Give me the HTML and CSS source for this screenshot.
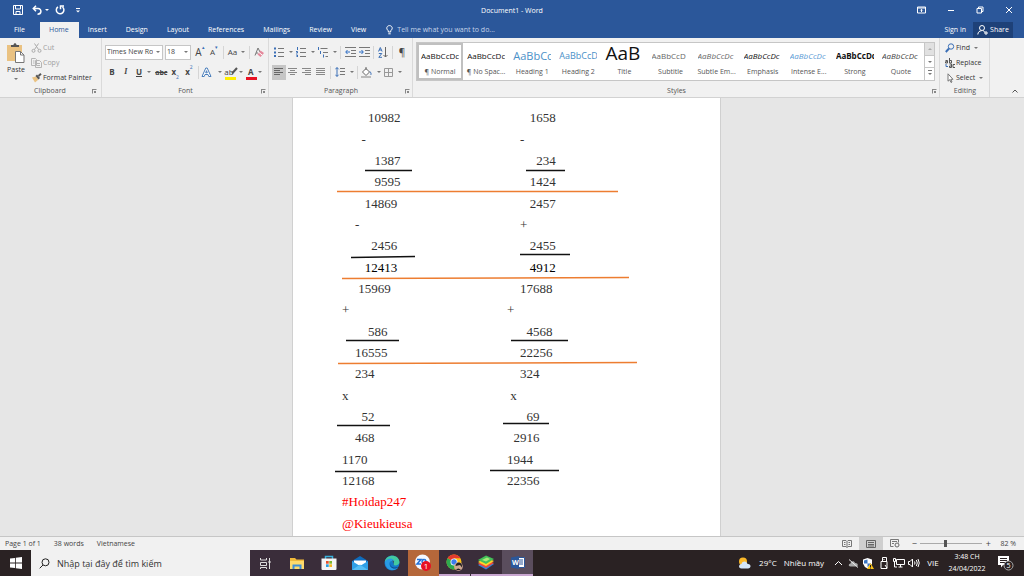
FILE: index.html
```
<!DOCTYPE html>
<html lang="vi">

<head>
    <meta charset="UTF-8">
    <title>Document1 - Word</title>
    <link rel="stylesheet" href="styles.css">
</head>

<body>
    <header class="top">
        <div class="titlebar">
            <div class="quick">
                <button aria-label="Save"><svg width="10" height="10" viewBox="0 0 10 10"><path d="M.5.5h9v9h-9zM2.500 .5v3.500h5v-3.500M3 9.500v-3h4v3" class="line"/></svg></button>
                <button aria-label="Undo"><svg width="10" height="10" viewBox="0 0 10 10"><path d="M4 .8L1.300 3.500 4 6.200M1.500 3.500h4.500c4 0 4 5.700-.500 5.700" class="line bold"/></svg></button>
                <i class="caret"></i>
                <button aria-label="Redo"><svg width="10" height="10" viewBox="0 0 10 10"><path d="M3 1.800A3.800 3.800 0 1 0 7.500 2M5.500 4.300V1h3.500" class="line bold"/></svg></button>
                <button aria-label="Customize"><svg width="8" height="8" viewBox="0 0 8 8"><path d="M2 2.500h4" class="line"/><path d="M2 4.500h4l-2 2z" fill="#fff"/></svg></button>
            </div>
            <h1>Document1 - Word</h1>
            <div class="window">
                <button aria-label="Ribbon options"><svg width="9" height="8" viewBox="0 0 9 8"><path d="M.5 1h8v6h-8zM.5 2h8M4.500 6V3.500M3.300 4.500l1.200-1.200 1.200 1.200" class="line"/></svg></button>
                <button aria-label="Minimize"><svg width="8" height="8" viewBox="0 0 8 8"><path d="M1 4.500h6" class="line"/></svg></button>
                <button aria-label="Restore"><svg width="8" height="8" viewBox="0 0 8 8"><path d="M1 2.500h4.500v4.500H1zM2.500 2.500V1H7v4.500H5.500" class="line"/></svg></button>
                <button aria-label="Close"><svg width="8" height="8" viewBox="0 0 8 8"><path d="M1 1l6 6M7 1L1 7" class="line"/></svg></button>
            </div>
        </div>
        <nav class="tabs">
            <button>File</button>
            <button class="active">Home</button>
            <button>Insert</button>
            <button>Design</button>
            <button>Layout</button>
            <button>References</button>
            <button>Mailings</button>
            <button>Review</button>
            <button>View</button>
            <label class="tell">
                <svg width="7" height="10" viewBox="0 0 7 10"><path d="M2.300 7V5.800C-.5 3.500 1 .6 3.500.6S7.500 3.500 4.700 5.800V7zM2.300 8.800h2.400" class="line"/></svg>
                <input type="text" placeholder="Tell me what you want to do...">
            </label>
            <button class="signin">Sign in</button>
            <button class="share"><svg width="11" height="10" viewBox="0 0 11 10"><circle cx="5" cy="3" r="2.500" class="line"/><path d="M.8 9.500C1 7 2.500 5.800 4.500 5.800M6 5.500l2 1.800M7 8h4M9 6v4" class="line"/></svg>Share</button>
        </nav>
    </header>

    <section class="ribbon">
        <div class="group clipboard">
            <div class="group-body">
                <button class="paste">
                    <svg width="18" height="20" viewBox="0 0 18 20"><path d="M0 2h15v16H0z" fill="#eac282"/><path d="M4 4V2h2.500c0-2.500 3-2.500 3 0H12v2z" fill="#555"/><path d="M8.500 8.500h5l3.500 3.500v7.500H8.500z" fill="#fff" stroke="#777"/><path d="M13.500 8.500V12H17" fill="none" stroke="#777"/></svg>
                    Paste
                    <i class="caret"></i>
                </button>
                <div class="stack">
                    <button class="off"><svg width="11" height="10" viewBox="0 0 11 10"><path d="M3.500.5l4 6M7.500.5l-4 6" stroke="#aaa" fill="none"/><circle cx="2.500" cy="7.800" r="1.500" stroke="#aaa" fill="none"/><circle cx="8.500" cy="7.800" r="1.500" stroke="#aaa" fill="none"/></svg>Cut</button>
                    <button class="off"><svg width="11" height="10" viewBox="0 0 11 10"><path d="M.5.5h4l1 1v6h-5zM4.500 2.500h4l2 2v5h-6zM6 5.500h3M6 7.500h3M2 3h1.500M2 5h1.500" stroke="#b5b5b5" fill="none"/></svg>Copy</button>
                    <button><svg width="11" height="10" viewBox="0 0 11 10"><path d="M1 4.500l4-1 2.500 3L4 9.500z" fill="#eac282"/><path d="M4.500 3l1.500-1.500 3 3.500-1.500 1.500z" fill="#555"/><path d="M7.500 3L10 .8" stroke="#555" stroke-width="2"/></svg>Format Painter</button>
                </div>
            </div>
            <footer>Clipboard<i class="launch"></i></footer>
        </div>

        <div class="group font">
            <div class="group-body rows">
                <div class="row">
                    <span class="pick name"><select aria-label="Font"><option>Times New Roman</option></select><i class="caret"></i></span>
                    <span class="pick size"><select aria-label="Font size"><option>18</option></select><i class="caret"></i></span>
                    <button class="tool big">A<sup>▴</sup></button>
                    <button class="tool">A<sup>▾</sup></button>
                    <i class="sep"></i>
                    <button class="tool wide">Aa<i class="caret"></i></button>
                    <i class="sep"></i>
                    <button class="tool" aria-label="Clear formatting"><svg width="11" height="11" viewBox="0 0 11 11"><path d="M1 8.500L4 1l2 4M2 6h2" stroke="#777" fill="none"/><path d="M6.500 3.500L10 6 6.500 10 3.500 7.500z" fill="#e4899c"/><path d="M5 5.500l3.300 2.700" stroke="#fff"/></svg></button>
                </div>
                <div class="row">
                    <button class="tool"><b>B</b></button>
                    <button class="tool"><i class="ital">I</i></button>
                    <button class="tool more"><b><u>U</u></b><i class="caret"></i></button>
                    <button class="tool"><b><s>abc</s></b></button>
                    <button class="tool"><b>x</b><sub>2</sub></button>
                    <button class="tool"><b>x</b><sup>2</sup></button>
                    <i class="sep"></i>
                    <button class="tool more" aria-label="Text effects"><svg width="12" height="11" viewBox="0 0 12 11"><path d="M1 9.500L4.800 1h1.400L10 9.500H7.800L7 7.500H4l-.8 2zM4.700 5.800h1.600L5.500 3.700z" fill="#fff" stroke="#4a7ebb"/></svg><i class="caret"></i></button>
                    <button class="tool more mark">ab<i class="caret"></i><svg width="8" height="8" viewBox="0 0 8 8"><path d="M2 6.500L7 1" stroke="#555" stroke-width="2"/></svg></button>
                    <button class="tool more colour"><b>A</b><i class="caret"></i></button>
                </div>
            </div>
            <footer>Font<i class="launch"></i></footer>
        </div>

        <div class="group para">
            <div class="group-body rows">
                <div class="row">
                    <button class="tool more" aria-label="Bullets"><svg width="10" height="10" viewBox="0 0 10 10"><path d="M0 1.500h2M0 5.500h2M0 9h2" stroke="#3b6fb6" stroke-width="2"/><path d="M4 1.500h6M4 5.500h6M4 9.500h6" stroke="#777"/></svg><i class="caret"></i></button>
                    <button class="tool more" aria-label="Numbering"><svg width="10" height="10" viewBox="0 0 10 10"><path d="M1.500 0v3M0 4.500h1.500v1.500H0M0 8h1.500v2H0" stroke="#3b6fb6" fill="none"/><path d="M4 1.500h6M4 5.500h6M4 9.500h6" stroke="#777"/></svg><i class="caret"></i></button>
                    <button class="tool more" aria-label="Multilevel list"><svg width="11" height="11" viewBox="0 0 11 11"><path d="M1.500 0v3M3.500 4v3M6.500 7.500v3" stroke="#3b6fb6"/><path d="M3.500 1.500h7M6 5.500h5M8.500 9.500h2.500" stroke="#777"/></svg><i class="caret"></i></button>
                    <i class="sep"></i>
                    <button class="tool" aria-label="Decrease indent"><svg width="11" height="10" viewBox="0 0 11 10"><path d="M0 .5h11M6 3.500h5M6 6.500h5M0 9.500h11" stroke="#777"/><path d="M5 5H1M2.500 3L.7 5l1.800 2" stroke="#2b6cc4" fill="none"/></svg></button>
                    <button class="tool" aria-label="Increase indent"><svg width="11" height="10" viewBox="0 0 11 10"><path d="M0 .5h11M6 3.500h5M6 6.500h5M0 9.500h11" stroke="#777"/><path d="M0 5h4M2.500 3l1.800 2-1.800 2" stroke="#2b6cc4" fill="none"/></svg></button>
                    <i class="sep"></i>
                    <button class="tool" aria-label="Sort"><svg width="10" height="11" viewBox="0 0 10 11"><path d="M.5 4.500L2.300.5l1.800 4M1.200 3h2.200M.8 6.500h3L.8 10.300h3.200" stroke="#3b6fb6" fill="none"/><path d="M7.500 0v10M5.500 8l2 2 2-2" stroke="#666" fill="none"/></svg></button>
                    <i class="sep"></i>
                    <button class="tool big">¶</button>
                </div>
                <div class="row">
                    <button class="tool on" aria-label="Align left"><svg width="10" height="8" viewBox="0 0 10 8"><path d="M0 .5h9M0 2.500h6M0 4.500h9M0 6.500h6" stroke="#666"/></svg></button>
                    <button class="tool" aria-label="Center"><svg width="10" height="8" viewBox="0 0 10 8"><path d="M0 .5h9M2 2.500h5M0 4.500h9M2 6.500h5" stroke="#888"/></svg></button>
                    <button class="tool" aria-label="Align right"><svg width="10" height="8" viewBox="0 0 10 8"><path d="M0 .5h9M3 2.500h6M0 4.500h9M3 6.500h6" stroke="#888"/></svg></button>
                    <button class="tool" aria-label="Justify"><svg width="10" height="8" viewBox="0 0 10 8"><path d="M0 .5h9M0 2.500h9M0 4.500h9M0 6.500h9" stroke="#888"/></svg></button>
                    <i class="sep"></i>
                    <button class="tool more" aria-label="Line spacing"><svg width="10" height="10" viewBox="0 0 10 10"><path d="M2 .5v9M.3 2.300L2 .6l1.700 1.700M.3 7.700L2 9.400l1.700-1.700" stroke="#3b6fb6" fill="none"/><path d="M5 1.500h5M5 4.500h5M5 7.500h5" stroke="#777"/></svg><i class="caret"></i></button>
                    <i class="sep"></i>
                    <button class="tool more" aria-label="Shading"><svg width="11" height="11" viewBox="0 0 11 11"><path d="M1.500 5L5 1.500 8.500 5 5 8.500zM5 3V0" stroke="#666" fill="#fff"/><path d="M9 4.500c1.500 2 1.200 3 .5 3.500" stroke="#3b6fb6" fill="none"/><path d="M0 9h10v2H0z" fill="#bbb"/></svg><i class="caret"></i></button>
                    <button class="tool more" aria-label="Borders"><svg width="9" height="9" viewBox="0 0 9 9"><path d="M.5.5h8v8h-8zM4.500.5v8M.5 4.500h8" stroke="#999" fill="none"/></svg><i class="caret"></i></button>
                </div>
            </div>
            <footer>Paragraph<i class="launch"></i></footer>
        </div>

        <div class="group styles">
            <div class="group-body">
                <div class="gallery">
                    <button class="current"><span class="sample">AaBbCcDc</span>¶ Normal</button>
                    <button><span class="sample">AaBbCcDc</span>¶ No Spac...</button>
                    <button><span class="sample h1">AaBbCc</span>Heading 1</button>
                    <button><span class="sample h2">AaBbCcD</span>Heading 2</button>
                    <button><span class="sample title">AaB</span>Title</button>
                    <button><span class="sample grey">AaBbCcD</span>Subtitle</button>
                    <button><span class="sample grey em">AaBbCcDc</span>Subtle Em...</button>
                    <button><span class="sample em">AaBbCcDc</span>Emphasis</button>
                    <button><span class="sample blue em">AaBbCcDc</span>Intense E...</button>
                    <button><span class="sample strong">AaBbCcDc</span>Strong</button>
                    <button><span class="sample quote em">AaBbCcDc</span>Quote</button>
                    <div class="scroll">
                        <button class="none" aria-label="Up"><i class="caret up"></i></button>
                        <button aria-label="Down"><i class="caret"></i></button>
                        <button aria-label="More"><i class="caret bar"></i></button>
                    </div>
                </div>
            </div>
            <footer>Styles<i class="launch"></i></footer>
        </div>

        <div class="group editing">
            <div class="group-body">
                <div class="stack">
                    <button><svg width="10" height="10" viewBox="0 0 10 10"><circle cx="6" cy="3.500" r="2.700" stroke="#3b6fb6" fill="none"/><path d="M4 5.500L.8 9" stroke="#3b6fb6" stroke-width="2"/></svg>Find<i class="caret"></i></button>
                    <button><svg width="10" height="10" viewBox="0 0 10 10"><path d="M.5 2.500h2v2.500h-2v-1.300h2M4.500 0v5h2V2.500h-2M4.500 6h2v3.500h-2v-1.500h2M10 6.500H8v3h2" stroke="#555" fill="none"/><path d="M1 6v2.500h2" stroke="#3b6fb6" fill="none"/></svg>Replace</button>
                    <button><svg width="10" height="10" viewBox="0 0 10 10"><path d="M3 .8v7.400l1.800-1.500 1.200 2.800 1-.5-1.200-2.700H8z" stroke="#777" fill="#fff"/></svg>Select<i class="caret"></i></button>
                </div>
            </div>
            <footer>Editing</footer>
        </div>
        <button class="collapse" aria-label="Collapse ribbon"><svg width="6" height="4" viewBox="0 0 6 4"><path d="M.5 3.500L3 1l2.500 2.500" stroke="#555" fill="none"/></svg></button>
    </section>

    <main class="desk">
        <article class="page">
            <p><span>        10982</span><span>       1658</span></p>
            <p><span>      -</span><span>    -</span></p>
            <p><span>          1387</span><span>         234</span></p>
            <p><span>          9595</span><span>       1424</span></p>
            <p><span>       14869</span><span>       2457</span></p>
            <p><span>    -</span><span>    +</span></p>
            <p><span>         2456</span><span>       2455</span></p>
            <p class="dark"><span>       12413</span><span>       4912</span></p>
            <p><span>     15969</span><span>    17688</span></p>
            <p><span>+</span><span>+</span></p>
            <p><span>        586</span><span>      4568</span></p>
            <p><span>    16555</span><span>    22256</span></p>
            <p><span>    234</span><span>    324</span></p>
            <p><span>x</span><span> x</span></p>
            <p><span>      52</span><span>      69</span></p>
            <p><span>    468</span><span>  2916</span></p>
            <p><span>1170</span><span>1944</span></p>
            <p><span>12168</span><span>22356</span></p>
            <p class="red"><span>#Hoidap247</span></p>
            <p class="red"><span>@Kieukieusa</span></p>
            <!-- hand drawn rules -->
            <svg class="rules" width="427" height="438" viewBox="0 0 427 438">
                <g stroke="#111" stroke-width="1.500">
                    <path d="M72 72.500h47M233 72.500h39M58 159.500l64-1M227 156.500h50M53 242.500h53M218 242.500h57M44 327.500h53M210 325.500h46M42 373.500h62M197 372.500h69"/>
                </g>
                <g stroke="#ed7d31" stroke-width="1.500">
                    <path d="M44 93.500h281M49 180.500l287-1M45 265.500l299-1"/>
                </g>
            </svg>
        </article>
    </main>

    <div class="status">
        <span>Page 1 of 1</span>
        <span>38 words</span>
        <span>Vietnamese</span>
        <div class="views">
            <button aria-label="Read mode"><svg width="10" height="8" viewBox="0 0 10 8"><path d="M.5.5h3.500l1 1 1-1h3.500v6H6l-1 1-1-1H.5zM5 1.500v6M2 2.500h1.500M2 4.500h1.500M6.500 2.500H8M6.500 4.500H8" stroke="#777" fill="none"/></svg></button>
            <button class="on" aria-label="Print layout"><svg width="10" height="8" viewBox="0 0 10 8"><path d="M.5.5h9v7h-9zM2 2.500h6M2 4.500h6M2 6h6" stroke="#666" fill="none"/></svg></button>
            <button aria-label="Web layout"><svg width="10" height="9" viewBox="0 0 10 9"><path d="M.5 7.500v-7h8v3M2 2.500h5M2 4.500h2M.5 7.500h3" stroke="#777" fill="none"/><circle cx="7" cy="6" r="2" stroke="#666" fill="none"/></svg></button>
        </div>
        <div class="zoom">
            <button>−</button>
            <input type="range" min="10" max="190" value="82" aria-label="Zoom">
            <button>+</button>
        </div>
        <span class="percent">82 %</span>
    </div>

    <footer class="taskbar">
        <button class="start" aria-label="Start"><svg width="12" height="12" viewBox="0 0 12 12"><path d="M0 1.500L5 1v4.600H0zM5.800.8L12 0v5.600H5.800zM0 6.400h5V11l-5-.600zM5.800 6.400H12V12l-6.200-.8z" fill="#fff"/></svg></button>
        <label class="search">
            <svg width="11" height="11" viewBox="0 0 11 11"><circle cx="6.500" cy="4.300" r="3.500" stroke="#222" fill="none"/><path d="M4 7L.7 10.300" stroke="#222"/></svg>
            <input type="text" placeholder="Nhập tại đây để tìm kiếm">
        </label>
        <div class="apps">
            <button aria-label="Task view"><svg width="11" height="11" viewBox="0 0 11 11"><path d="M.5 0v2h6V0M.5 4.500h6v3h-6zM.5 11V9.500h6V11M9.500 0v11" stroke="#ddd" fill="none"/><path d="M8.500 3h2v2h-2z" fill="#ddd"/></svg></button>
            <button aria-label="Explorer"><svg width="14" height="13" viewBox="0 0 14 13"><path d="M0 1h5l1.500 1.500H14V12H0z" fill="#f0b93a"/><path d="M0 4h14v8H0z" fill="#ffda6b"/><path d="M2.500 12V7.500h9V12h-2V9.500h-5V12z" fill="#3f8fd8"/></svg></button>
            <button aria-label="Store"><svg width="16" height="16" viewBox="0 0 16 16"><path d="M4.500 4V1.500h7V4" stroke="#39b1dc" stroke-width="1.500" fill="none"/><path d="M.5 3.500h15V14q0 1-1 1h-13q-1 0-1-1z" fill="#f5f5f5"/><path d="M5 6h2.700v2.700H5z" fill="#e8512a"/><path d="M8.300 6H11v2.700H8.300z" fill="#7cb82f"/><path d="M5 9.300h2.700V12H5z" fill="#2a9fe0"/><path d="M8.300 9.300H11V12H8.300z" fill="#f5b722"/></svg></button>
            <button aria-label="Mail"><svg width="16" height="14" viewBox="0 0 16 14"><path d="M0 5l8-5 8 5v9H0z" fill="#0f6cbd"/><path d="M2 4.500h12V9H2z" fill="#fff"/><path d="M0 5l8 5 8-5v9H0z" fill="#2f9fe6"/><path d="M0 14l8-5.500 8 5.500z" fill="#55bdf3"/></svg></button>
            <button aria-label="Edge"><svg width="16" height="16" viewBox="0 0 16 16"><circle cx="8" cy="8" r="7.500" fill="#1477c9"/><path d="M.8 7C1.500-1 15-1.500 15.500 7c0 3-4 4-6 3 2-4-4-6-8.700-3z" fill="#43c9a0"/><path d="M1 6.500C4 2 10 3 10.500 7c-3-2.500-6-.500-5 3 1 3 5 4.500 8.500 3C10 17 1 15.500 1 6.500z" fill="#2a9be3"/><path d="M6.500 7.500c-1.500 4 3 6 7.500 4.500-4 3.500-9.500.5-7.500-4.500z" fill="#0c4a91"/><path d="M9.500 10q-1-1 0-2.500 1-1.500-1-2.500" fill="#3a2f3a"/></svg></button>
            <button class="alert" aria-label="Zalo"><svg width="18" height="18" viewBox="0 0 18 18"><circle cx="8.500" cy="8" r="7.500" fill="#f4f8ff"/><path d="M3 5.500h4l-4 4.500h4M10 5.500a2 2 0 1 0 .1 0" stroke="#1f6fd6" stroke-width="1.500" fill="none"/><circle cx="12" cy="12" r="5" fill="#e81123"/><text x="12" y="15" text-anchor="middle" font-size="8" fill="#fff">1</text></svg></button>
            <button class="open" aria-label="Chrome"><svg width="17" height="17" viewBox="0 0 17 17"><circle cx="8" cy="8" r="7.500" fill="#fbc116"/><path d="M8 8L1.500 4.300A7.500 7.500 0 0 1 14.500 4.300H8z" fill="#e33b2e"/><path d="M8 8l.7 7.500A7.500 7.500 0 0 1 1.500 4.300z" fill="#2da94f"/><circle cx="8" cy="8" r="3.500" fill="#fff"/><circle cx="8" cy="8" r="2.700" fill="#3b7ded"/><circle cx="12.500" cy="12.500" r="4.300" fill="#cfa892"/><path d="M9.500 12q.5-4 4-3.500 3 1 2.500 5l-2-2.500zM10 16q2-3 5 0" fill="#222"/></svg></button>
            <button class="open" aria-label="BlueStacks"><svg width="16" height="15" viewBox="0 0 16 15"><path d="M0 10l8-4.500 8 3.500-8 5.500z" fill="#3183e0"/><path d="M0 8.800l8-4.500L16 8l-8 5z" fill="#ef4b3c"/><path d="M0 7l8-4.500L16 6l-8 5z" fill="#ffd52b"/><path d="M0 5l8-4.500L16 4 8 9z" fill="#44c158"/><path d="M4 5l5-2.500L12 4 8 6.500z" fill="#a9eb79"/></svg></button>
            <button class="open current" aria-label="Word"><svg width="14" height="13" viewBox="0 0 14 13"><path d="M6 1.500h7.500v10H6z" fill="#fff" stroke="#2b579a"/><path d="M8 4h4M8 6h4M8 8h4" stroke="#2b579a"/><path d="M0 1.500L8 0v13l-8-1.500z" fill="#2b579a"/><text x="1" y="9" font-size="7" font-weight="700" fill="#fff">W</text></svg></button>
        </div>
        <div class="tray">
            <button class="weather"><svg width="14" height="12" viewBox="0 0 14 12"><circle cx="5" cy="4.500" r="4" fill="#fbb829"/><path d="M3.500 11.500c-3.500 0-3-4.500 0-4.500 1-3.500 5.500-3 6 0 4-.5 4 4.500.5 4.500z" fill="#d5e6f8"/></svg><span>29°C</span><span>Nhiều mây</span></button>
            <button aria-label="Hidden icons"><svg width="9" height="6" viewBox="0 0 9 6"><path d="M1 5l3.500-3.500L8 5" class="line"/></svg></button>
            <button aria-label="OneDrive"><svg width="11" height="9" viewBox="0 0 11 9"><path d="M2.500 7.500c-2.500 0-2-3 0-3 .5-3 4-3 4.500-.5 3-.5 4 3.500 1 3.500z" fill="#aaa"/><path d="M1 .5l9 8" stroke="#eee"/></svg></button>
            <button aria-label="Security"><svg width="11" height="11" viewBox="0 0 11 11"><path d="M4.500 0L9 1.500v4Q8 9 4.500 10.500 1 9 0 5.500v-4z" fill="#fff"/><path d="M4.500 1.500v4H1V2.500zM4.500 5.500H8Q7 8 4.500 9z" fill="#3a75c4"/><path d="M7.500 5l3.500 6H4z" fill="#fbc116"/><path d="M7.500 7v2M7.500 9.500v1" stroke="#222"/></svg></button>
            <button aria-label="USB"><svg width="8" height="12" viewBox="0 0 8 12"><path d="M2.500 4V.5h4V4M1 4.500h6v7H1zM4 2v1M5 8l2 3" class="line"/></svg></button>
            <button aria-label="Network"><svg width="12" height="10" viewBox="0 0 12 10"><path d="M3.500 1.500h8v5h-8zM5.500 9h4M7.500 6.500V9M.5.5h2v3h-2zM1.500 3.500V9H4" class="line"/></svg></button>
            <button aria-label="Volume"><svg width="12" height="10" viewBox="0 0 12 10"><path d="M.5 3.500H2L4.500 1v8L2 6.500H.5zM6.500 3.500q1 1.500 0 3M8.300 2q2 3 0 6M10 1q2.500 4 0 8" class="line"/></svg></button>
            <button class="lang">VIE</button>
            <button class="clock"><time>3:48 CH</time><time>24/04/2022</time></button>
            <button class="notes" aria-label="Notifications"><svg width="17" height="16" viewBox="0 0 17 16"><path d="M1 1h11v9H6l-2 2.500V10H1z" fill="#fff"/><path d="M3 3.500h7M3 5.500h7M3 7.500h5" stroke="#2a2223"/><circle cx="11.500" cy="10.500" r="4.500" fill="#2a2223" stroke="#aaa"/><text x="11.500" y="13" text-anchor="middle" font-size="7" fill="#fff">5</text></svg></button>
        </div>
    </footer>
</body>

</html>
```

FILE: styles.css
```
* {
    box-sizing: border-box;
}

body {
    margin: 0;
    height: 100vh;
    display: flex;
    flex-direction: column;
    overflow: hidden;
    font-family: "Open Sans", "Noto Sans", sans-serif;
    font-size: 7px;
    line-height: 10px;
    color: #444;
    background: #e6e6e6;
}

button,
input,
select {
    margin: 0;
    padding: 0;
    border: 0;
    background: none;
    font: inherit;
    color: inherit;
}

button {
    display: flex;
    align-items: center;
    justify-content: center;
    white-space: nowrap;
}

svg {
    flex: none;
}

.line {
    fill: none;
    stroke: #fff;
}

.bold {
    stroke-width: 1.5;
}

.caret {
    flex: none;
    border: 2px solid transparent;
    border-top-color: currentColor;
    border-bottom: 0;
}

.caret.up {
    transform: rotate(180deg);
}

.caret.bar {
    box-shadow: 0 -2px #fff, 0 -3px currentColor;
}

/* title and tabs */
.top {
    background: #2b579a;
    color: #fff;
}

.titlebar {
    height: 22px;
    display: grid;
    grid-template-columns: 1fr auto 1fr;
    align-items: center;
}

.titlebar h1 {
    margin: 0;
    font-size: 7px;
    font-weight: 400;
}

.quick {
    display: flex;
    align-items: center;
    gap: 9px;
    padding: 0 0 3px 13px;
}

.quick .caret {
    margin: 0 -3px 0 -6px;
}

.window {
    display: flex;
    justify-content: flex-end;
    gap: 21px;
    padding: 0 11px 3px 0;
}

.tabs {
    height: 16px;
    display: flex;
    padding: 0 11px 0 0;
}

.tabs button {
    padding: 0 10px 0 9px;
}

.tabs button:first-child {
    width: 40px;
}

.tabs .active {
    background: #f1f1f1;
    color: #2b579a;
}

.tell {
    flex: 1;
    display: flex;
    align-items: center;
    gap: 4px;
    padding-left: 10px;
}

.tell input {
    width: 140px;
}

.tell input::placeholder {
    color: #c5d3e8;
}

.tabs .signin {
    padding: 0 7px;
}

.tabs .share {
    gap: 2px;
    width: 40px;
    padding: 0;
    background: #1e4178;
}

/* ribbon */
.ribbon {
    height: 60px;
    display: flex;
    background: #f1f1f1;
    border-bottom: 1px solid #d2d2d2;
}

.ribbon .caret {
    color: #777;
}

.group {
    display: flex;
    flex-direction: column;
    padding: 2px 2px 0 3px;
    border-right: 1px solid #dadada;
}

.group-body {
    flex: 1;
    display: flex;
    min-height: 0;
}

.group footer {
    display: flex;
    justify-content: center;
    position: relative;
    height: 11px;
    color: #555;
}

.launch {
    position: absolute;
    right: 0;
    top: 3px;
    width: 5px;
    height: 5px;
    border: 1px solid #888;
    border-right-color: transparent;
    border-bottom-color: transparent;
    background: linear-gradient(#888, #888) 100% 100% / 2px 2px no-repeat;
}

.clipboard {
    width: 102px;
    padding-right: 4px;
}

.paste {
    flex-direction: column;
    justify-content: flex-start;
    width: 26px;
    padding-top: 3px;
    color: #333;
}

.paste svg {
    margin-bottom: 2px;
}

.paste .caret {
    margin-top: 3px;
}

.stack {
    display: flex;
    flex-direction: column;
    align-items: flex-start;
    padding-left: 2px;
}

.stack button {
    height: 15px;
    gap: 1px;
    color: #333;
}

.stack .off {
    color: #a0a0a0;
}

.rows {
    flex-direction: column;
    gap: 4px;
    padding-top: 4px;
}

.row {
    display: flex;
    align-items: center;
    height: 16px;
}

.font {
    width: 167px;
}

.para {
    width: 144px;
}

.pick {
    position: relative;
    margin-right: 2px;
    height: 15px;
    border: 1px solid #c6c6c6;
    background: #fff;
}

.pick select {
    display: block;
    width: 47px;
    height: 13px;
    padding: 0 0 0 1px;
    appearance: none;
    overflow: hidden;
}

.pick.size select {
    width: 16px;
}

.pick .caret {
    position: absolute;
    right: 2px;
    top: 5px;
}

.name {
    width: 58px;
}

.size {
    width: 26px;
}

.tool {
    position: relative;
    width: 14px;
    height: 15px;
    font-size: 8px;
}

.tool sup,
.tool sub {
    font-size: 5px;
    line-height: 5px;
    color: #3b6fb6;
}

.tool sup {
    align-self: flex-start;
}

.tool sub {
    align-self: flex-end;
}

.tool.big {
    font-size: 10px;
}

.tool.wide {
    width: 21px;
    gap: 4px;
}

.tool.more {
    width: 22px;
    gap: 5px;
}

.tool.on {
    background: #c6c6c6;
}

.tool s {
    font-size: 7px;
}

.ital {
    font-family: "Liberation Serif", serif;
    font-weight: 700;
}

.mark,
.colour {
    background: linear-gradient(#ffee00, #ffee00) 2px 100% / 11px 3px no-repeat;
}

.mark svg {
    position: absolute;
    left: 7px;
    top: 2px;
}

.colour {
    background-image: linear-gradient(#e81123, #e81123);
}

.sep {
    width: 1px;
    height: 13px;
    margin: 0 2px;
    background: #d5d5d5;
}

.styles {
    flex: 1;
    min-width: 0;
}

.gallery {
    flex: 1;
    display: flex;
    height: 39px;
    margin: 2px 2px 0 0;
    border: 1px solid #c6c6c6;
    background: #fff;
}

.gallery > button {
    flex: 1;
    min-width: 0;
    flex-direction: column;
    justify-content: flex-end;
    padding-bottom: 3px;
    color: #555;
}

.gallery .current {
    box-shadow: inset 0 0 0 2px #c0c0c0;
}

.sample {
    width: 38px;
    height: 20px;
    line-height: 18px;
    overflow: hidden;
    font-size: 8px;
    text-align: left;
    color: #111;
}

.sample.h1 {
    font-size: 11px;
    color: #4a90c8;
}

.sample.h2 {
    font-size: 9px;
    color: #4a90c8;
}

.sample.title {
    height: 22px;
    font-size: 19px;
    line-height: 17px;
}

.sample.grey {
    color: #666;
}

.sample.blue {
    color: #5b9bd5;
}

.sample.quote {
    color: #444;
}

.em {
    font-style: italic;
}

.strong {
    font-weight: 700;
}

.scroll {
    width: 10px;
    display: flex;
    flex-direction: column;
    border-left: 1px solid #c6c6c6;
}

.scroll button {
    flex: 1;
    border-bottom: 1px solid #c6c6c6;
}

.scroll button:last-child {
    border-bottom: 0;
}

.scroll .none {
    background: #e1e1e1;
}

.scroll .none .caret {
    color: #aaa;
}

.editing {
    width: 50px;
}

.editing .caret {
    margin-left: 3px;
}

.collapse {
    align-self: flex-end;
    width: 34px;
    height: 12px;
    padding-left: 16px;
}

/* document */
.desk {
    flex: 1;
    display: flex;
    justify-content: center;
    align-items: flex-start;
    min-height: 0;
    padding-right: 11px;
    overflow: hidden;
}

.page {
    position: relative;
    display: grid;
    grid-auto-rows: 22px 21px 21px;
    width: 427px;
    padding: 9px 0 4px 49px;
    background: #fff;
    box-shadow: -1px 0 #d0d0d0, 1px 0 #d0d0d0;
    font-family: "Liberation Serif", serif;
    font-size: 13px;
    line-height: 22px;
    color: #333;
}

.page p {
    display: grid;
    grid-template-columns: 165px 1fr;
    margin: 0;
    white-space: pre;
}

.page .dark {
    color: #000;
}

.page .red {
    color: #ff0000;
}

.rules {
    position: absolute;
    left: 0;
    top: 0;
    fill: none;
}

/* status bar */
.status {
    height: 14px;
    display: flex;
    align-items: center;
    gap: 13px;
    padding: 0 8px 0 5px;
    background: #f1f1f1;
    border-top: 1px solid #c6c6c6;
}

.views {
    display: flex;
    margin-left: auto;
}

.views button {
    width: 24px;
    height: 13px;
}

.views .on {
    background: #cfcfcf;
}

.zoom {
    display: flex;
    align-items: center;
    gap: 2px;
    margin-left: -10px;
}

.zoom button {
    width: 8px;
    font-size: 9px;
}

.zoom input {
    width: 62px;
    height: 10px;
    appearance: none;
    background: linear-gradient(#aaa, #aaa) center / 100% 1px no-repeat;
}

.zoom input::-webkit-slider-thumb {
    appearance: none;
    width: 3px;
    height: 7px;
    background: #555;
}

.percent {
    margin-left: -5px;
}

/* taskbar */
.taskbar {
    height: 26px;
    display: flex;
    background: #2a2223;
    color: #fff;
    font-size: 8px;
}

.start {
    width: 31px;
}

.search {
    display: flex;
    align-items: center;
    gap: 7px;
    width: 219px;
    padding-left: 8px;
    background: #f1f1f1;
    font-size: 9px;
}

.search input {
    flex: 1;
    height: 20px;
}

.search input::placeholder {
    color: #333;
}

.apps {
    display: flex;
    justify-content: space-between;
    width: 283px;
    background: #3a2d3a;
}

.apps button {
    width: 31px;
}

.apps .alert {
    background: #b5673a;
}

.apps .open {
    border-bottom: 2px solid #c8a6d0;
}

.apps .current {
    background: #5a4d5d;
}

.tray {
    display: flex;
    align-items: center;
    margin-left: auto;
    padding-right: 3px;
}

.tray button {
    width: 15px;
    height: 26px;
}

.tray .weather {
    width: auto;
    gap: 7px;
    margin-right: 7px;
}

.tray .lang {
    width: 24px;
}

.tray .clock {
    flex-direction: column;
    width: 44px;
    font-size: 7px;
    line-height: 12px;
}

.tray .notes {
    width: 32px;
}
```
